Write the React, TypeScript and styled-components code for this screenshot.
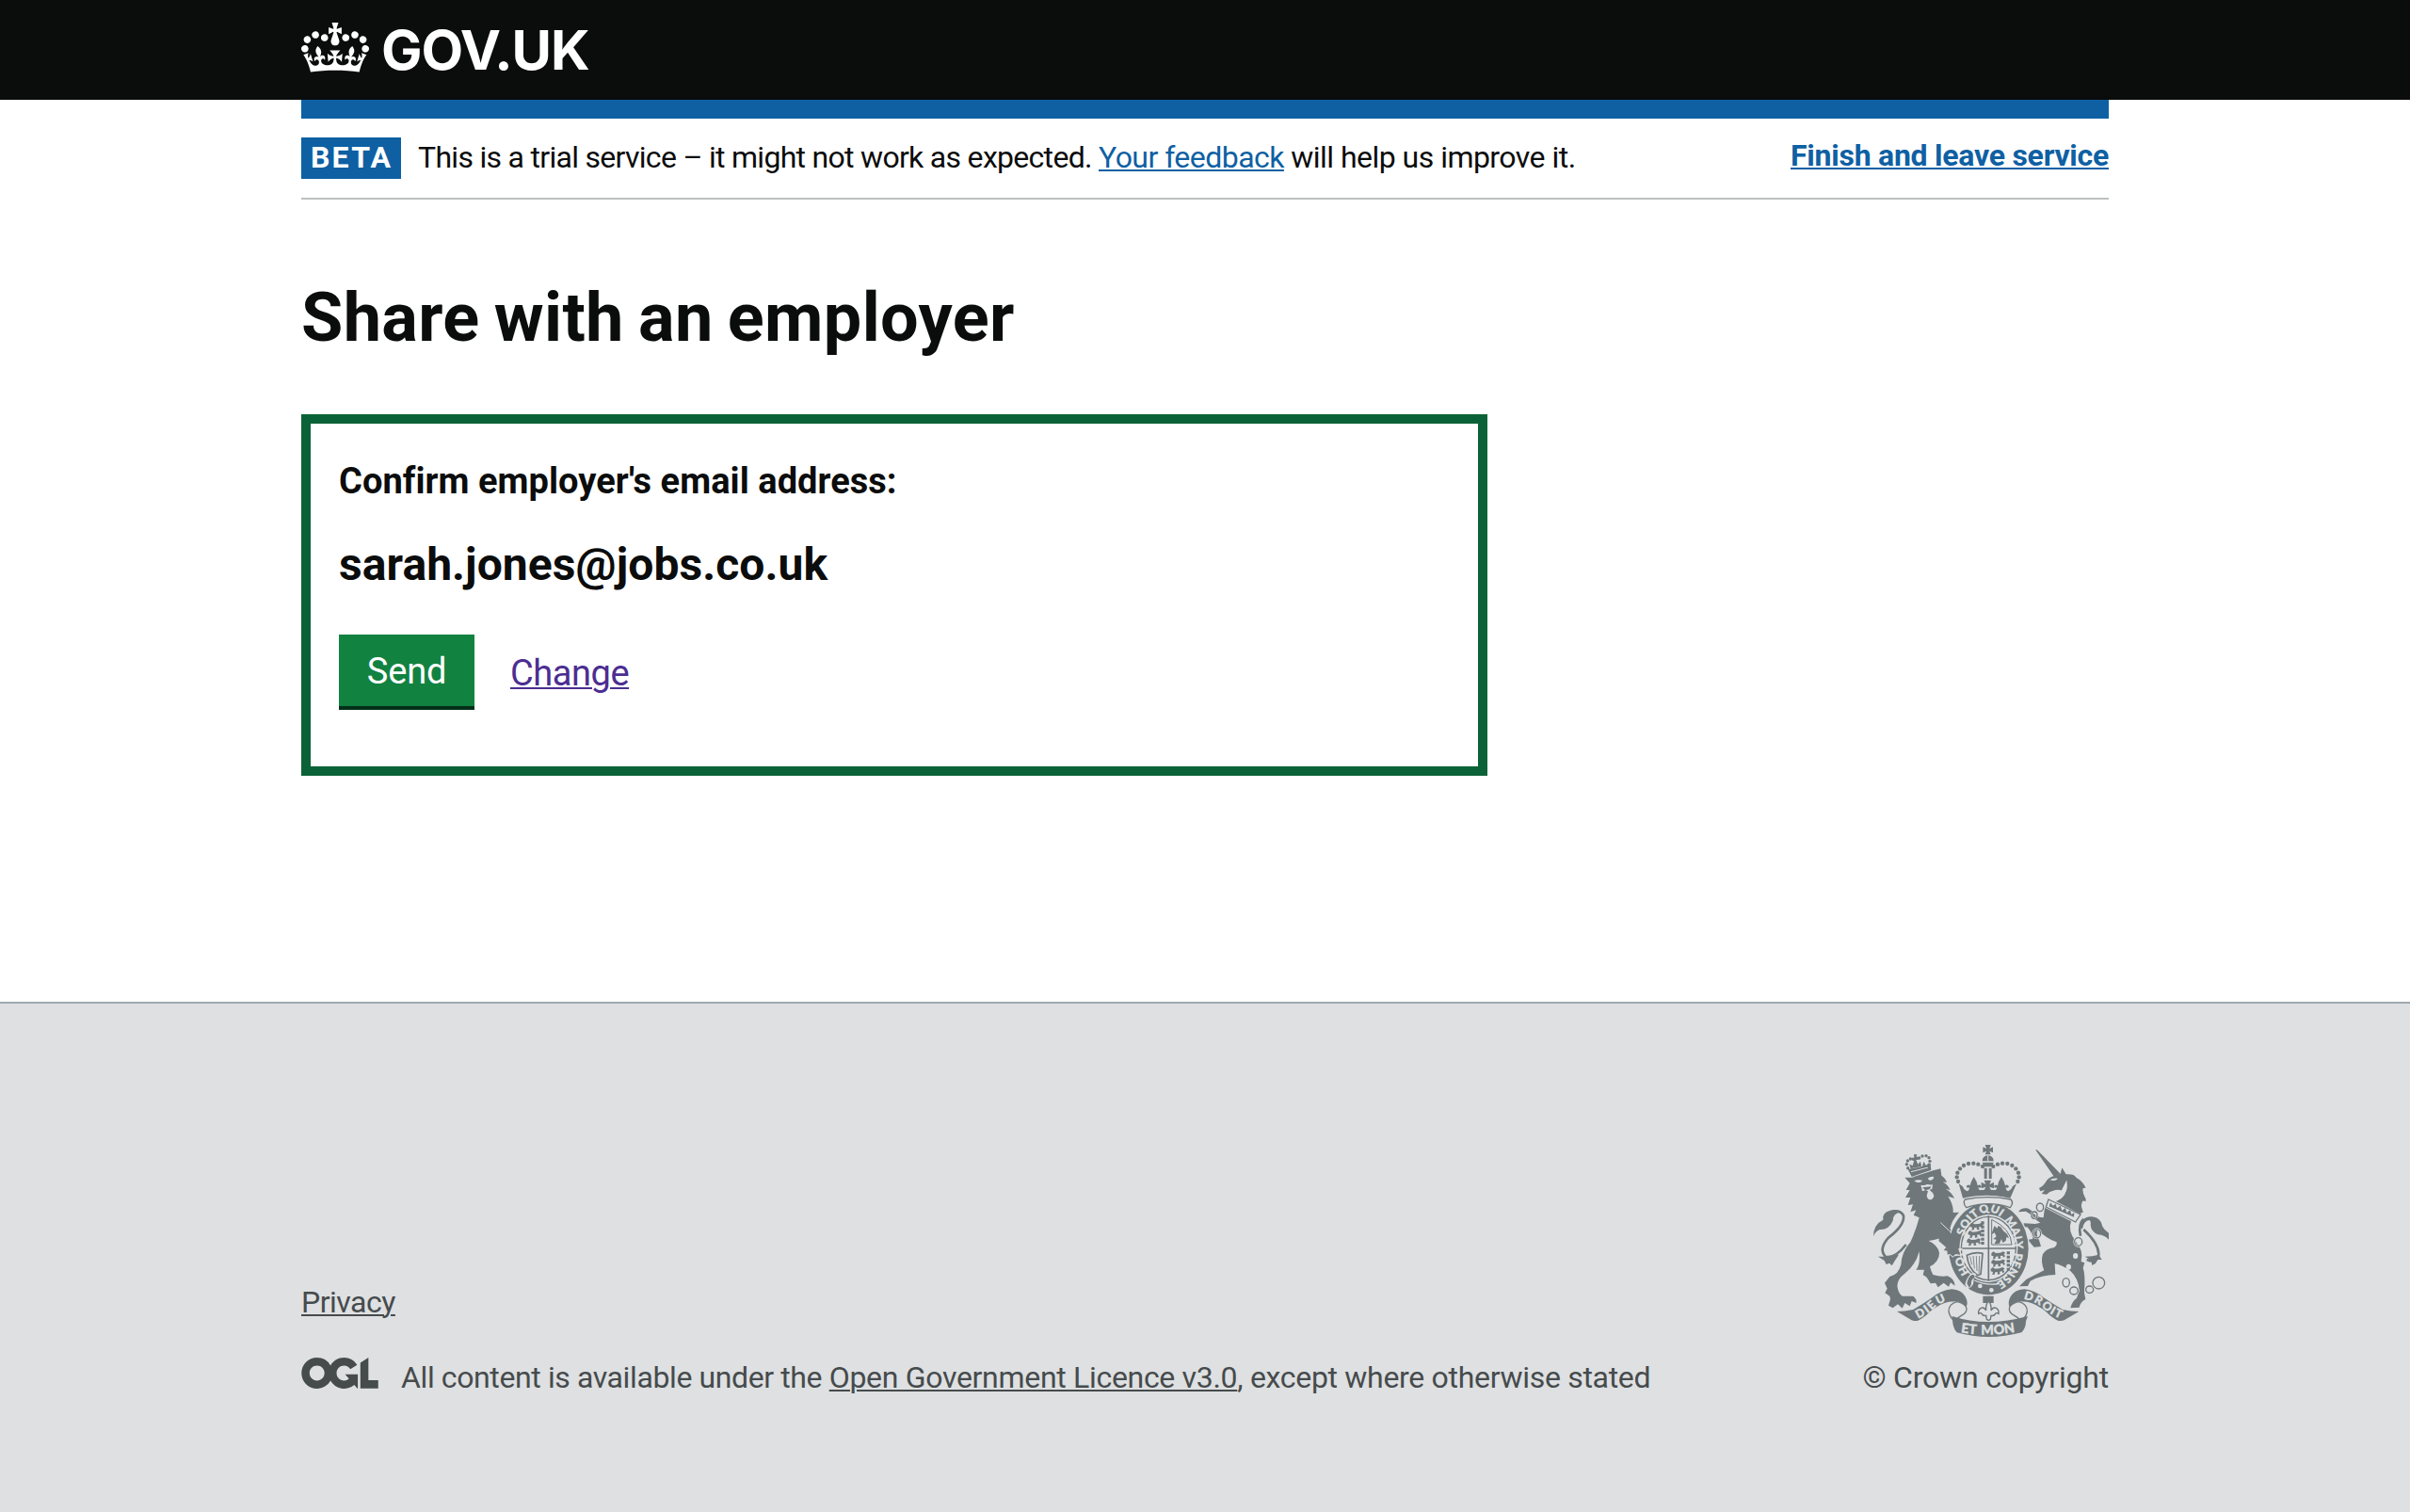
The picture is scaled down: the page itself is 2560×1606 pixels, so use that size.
import React from "react";
import styled, { createGlobalStyle } from "styled-components";

const color = {
  black: "#0b0c0c",
  blue: "#0e60a3",
  green: "#128241",
  greenDark: "#0c6238",
  greenShadow: "#032f17",
  visited: "#4b2e91",
  rule: "#bebfc0",
  footer: "#dee0e2",
  footerRule: "#9ea9af",
  footerText: "#464b4c",
  arms: "#6f777a",
};

const GlobalStyle = createGlobalStyle`
  *, *::before, *::after { box-sizing: border-box; }
  html, body { margin: 0; background: #fff; }
  body { font-family: Roboto, "Noto Sans", sans-serif; color: ${color.black}; }
  h1, p { margin: 0; }
`;

const Page = styled.div`
  display: flex;
  flex-direction: column;
  min-height: 1606px;
`;

const Container = styled.div`
  width: 1920px;
  margin: 0 auto;
`;

const Header = styled.header`
  height: 106px;
  background: ${color.black};
`;

const Brand = styled(Container)`
  display: flex;
  align-items: flex-start;
  gap: 13px;
  padding-top: 24px;
  color: #fff;
`;

const Crown = styled.svg`
  width: 72px;
  height: 53px;
  fill: currentColor;
`;

const BrandName = styled.span`
  margin-top: -1px;
  font: 700 58px/60px Inter, sans-serif;
  letter-spacing: -1.1px;
`;

const BlueBar = styled.div`
  height: 20px;
  background: ${color.blue};
`;

const PhaseBanner = styled.div`
  display: flex;
  align-items: flex-start;
  height: 86px;
  padding: 20px 0;
  border-bottom: 2px solid ${color.rule};
`;

const Tag = styled.strong`
  width: 106px;
  height: 44px;
  padding-left: 10px;
  background: ${color.blue};
  color: #fff;
  font-size: 32px;
  line-height: 42px;
  letter-spacing: 2.2px;
`;

const Text = styled.span<{ $track?: number }>`
  letter-spacing: ${(p) => p.$track ?? 0}px;
`;

const Link = styled.a<{ $tone: string; $track?: number; $bold?: boolean }>`
  color: ${(p) => p.$tone};
  font-weight: ${(p) => (p.$bold ? 700 : 400)};
  letter-spacing: ${(p) => p.$track ?? 0}px;
  text-decoration: underline;
  text-decoration-thickness: 2px;
  text-underline-offset: 2px;
`;

const PhaseText = styled.p`
  margin-left: 18px;
  font-size: 32px;
  line-height: 42px;
  white-space: nowrap;
`;

const Leave = styled.div`
  margin-left: auto;
  font-size: 32px;
  line-height: 38px;
`;

const Title = styled.h1`
  margin: 86px 0 62px;
  font-size: 72px;
  line-height: 80px;
  letter-spacing: 0.35px;
  word-spacing: -3px;
`;

const Panel = styled.section`
  width: 1260px;
  height: 384px;
  padding: 36px 30px 0;
  border: 10px solid ${color.greenDark};
`;

const PanelLabel = styled.p`
  font-size: 38px;
  font-weight: 700;
  line-height: 50px;
  letter-spacing: 0.05px;
`;

const Email = styled.p`
  margin-top: 34px;
  font-size: 48px;
  font-weight: 700;
  line-height: 60px;
  letter-spacing: 0.08px;
`;

const Actions = styled.div`
  display: flex;
  align-items: flex-start;
  gap: 38px;
  margin-top: 44px;
  font-size: 38px;
  line-height: 78px;
`;

const SendButton = styled.button`
  width: 144px;
  height: 80px;
  padding: 2px 0 0;
  border: 0;
  border-bottom: 4px solid ${color.greenShadow};
  background: ${color.green};
  color: #fff;
  font: 400 38px/74px Roboto, sans-serif;
  letter-spacing: -0.2px;
`;

const ChangeWrap = styled.div`
  margin-top: 2px;
`;

const Footer = styled.footer`
  flex: 1;
  margin-top: 240px;
  padding-top: 146px;
  border-top: 2px solid ${color.footerRule};
  background: ${color.footer};
  color: ${color.footerText};
  font-size: 32px;
  line-height: 40px;
`;

const FooterGrid = styled(Container)`
  display: grid;
  grid-template-columns: 1fr auto;
  align-items: end;
`;

const FooterMeta = styled.div`
  display: flex;
  flex-direction: column;
  gap: 40px;
`;

const Licence = styled.div`
  display: flex;
  align-items: flex-start;
  gap: 24px;
  white-space: nowrap;
`;

const OglLogo = styled.svg`
  width: 82px;
  height: 33px;
  margin-top: -1px;
  fill: currentColor;
`;

const Copyright = styled.div`
  display: flex;
  flex-direction: column;
  align-items: flex-end;
  gap: 23px;
  letter-spacing: -0.2px;
`;

const Arms = styled.svg`
  display: block;
  width: 252px;
  height: 208px;
  fill: ${color.arms};
  stroke: none;
  font-family: Lato, sans-serif;
  font-weight: 900;
  letter-spacing: 0;
`;

const lit = color.footer;
const ink = color.arms;

const archBeads: [number, number][] = [
  [408, 117], [394, 110], [379, 107], [363, 108], [348, 114], [336, 124], [328, 137], [326, 151], [330, 165],
];
const lionCrownBeads: [number, number][] = [
  [170, 122], [166, 110], [169, 99], [178, 93], [188, 94], [206, 90], [216, 84], [228, 83], [237, 89], [240, 100], [238, 111],
];
const chainRings: [number, number, number, number][] = [
  [591, 247, 11, 13], [573, 272, 9, 11], [581, 331, 12, 14], [713, 357, 12, 13], [674, 487, 11, 14],
  [699, 513, 13, 12], [749, 509, 12, 11], [778, 488, 19, 19],
];

const passant = "M0 6l6-6 8 5 14-1 10-4 6 4-4 5 4 6-6 4-2-6-8 1 2 8-8 1-1-8-7 1-2 7-7 1 2-9-7-2z";

function RibbonSide() {
  return (
    <g>
      <path d="M135 579q26 0 52-6 30-18 58-37 30-24 64-28 32 2 44 24 10 18 3 33-12-16-30-18l-26 1q-30 6-60 32-22 22-38 28-10 3-20-1z" />
      <path d="M326 548q-27 8-26 31 4 20 18 29 18-14 32-22 12-12 4-24-12-12-28-14z" fill={lit} stroke={ink} strokeWidth="4" />
    </g>
  );
}

function CoatOfArms() {
  return (
    <Arms viewBox="54 36 756 624" role="img">
      <defs>
        <path id="garter" d="M427 496A103 120 0 0 1 427 260A103 120 0 0 1 427 496" />
        <path id="dieu" d="M202 602Q232 588 256 566Q278 548 312 541" />
        <path id="droit" d="M538 539Q574 546 598 566Q624 592 668 606" />
        <path id="etmon" d="M338 646Q427 660 516 644" />
      </defs>

      {/* lion */}
      <path d="M170 126l72-15 2 17-62 22z" />
      <path d="M180 134l54-14" stroke={lit} strokeWidth="3" />
      {lionCrownBeads.map(([x, y]) => <circle key={`${x}-${y}`} cx={x} cy={y} r="5" />)}
      <path d="M189 78l10 1-2 7 6 0 1 9-8 1 6 14 8-9 3 15-34 8-4-14 10 5 5-18-7 0-1-8 8 0z" />
      <path d="M182 126l-7-14 9 2zM216 119l4-18 8 13 7-7-2 12z" />
      <path d="M160 152 L183 152 L250 130 L274 124 L277 146 Q290 154 294 168 L281 166 Q298 176 305 192 L290 188 Q310 200 318 218 L298 212 Q316 240 314 264 L333 263 Q312 284 304 314 Q334 350 338 398 L326 395 L318 404 L310 394 L298 399 L298 386 L284 384 L292 374 L268 354 L272 346 Q252 352 236 354 Q264 366 270 392 Q270 420 240 436 Q244 452 250 462 Q276 470 296 466 Q318 474 320 497 L306 487 L300 500 L284 488 L266 502 L258 488 L242 490 L230 470 L218 462 L222 446 L196 446 Q210 430 206 388 Q196 430 160 458 Q130 480 138 508 Q142 524 152 530 L186 530 Q200 540 196 552 L182 546 L176 562 L160 552 L152 569 L138 556 L122 568 L108 560 L114 540 L112 530 L97 520 L104 506 L96 488 L112 468 Q140 462 148 430 Q150 390 178 358 Q196 320 206 280 L188 272 L196 256 L178 262 L186 238 L170 240 L178 216 L162 216 L176 192 L164 192 L176 170 Z" />
      <path d="M190 162q12-4 26-1-4 8-13 7-8 0-13-6zM233 155q10-8 20-5-2 10-10 11-6 1-10-6zM211 176q8 2 14 0 6-4 14-1 6 2 10-1l-2 14-8 4q12 8 14 18-2 12-12 13-10-1-11-14l4-13-8-4-10 4z" fill={lit} />
      <path d="M216 184l28-3-4 8-14 4z" />
      <path d="M274 296l30 28q22 26 28 62" fill="none" stroke={lit} strokeWidth="3" />
      <path d="M274 298q14 20 30 30 24 28 32 70l-24-2-14-10-6-12-22-20-2-10 30-4z" />
      <path d="M164 366Q128 412 98 404Q76 380 108 344Q160 304 156 274Q148 254 118 262" fill="none" stroke={ink} strokeWidth="8" />
      <path d="M60 340Q60 302 91 287Q86 264 114 257Q134 252 150 262Q122 266 122 290Q108 320 80 318Q66 324 60 340ZM75 404l22 0 44-6-12 18-10 17-8-8-10 4-6-12z" />

      {/* unicorn */}
      <path d="M576 63l7 2 73 75-20 10z" />
      <path d="M588 186Q604 178 612 162Q620 150 640 146L656 140L661 121L674 142Q700 140 706 152Q728 164 736 184L728 184Q724 200 738 222L730 222Q716 240 728 262L718 268L642 228Q672 216 672 202Q660 188 640 192L622 198L612 206L596 204L606 192L592 196Z" />
      <path d="M622 160q12-8 26-5-8 11-26 5zM678 156q8 22-4 42-14 18-34 24 18-18 22-34z" fill={lit} />
      <path d="M672 146Q706 146 720 172L737 184L724 188L728 204L738 228L724 226L722 242L728 264L714 262L650 226Q690 200 672 146Z" />
      <path d="M606 248L690 292Q678 322 706 358Q730 384 722 420L733 424L728 440Q736 460 732 520L736 540Q720 548 716 566L688 568Q692 548 708 536L716 512Q714 474 688 450Q664 432 638 426L640 462Q596 462 560 482L552 498L525 499L548 476L604 448Q592 420 600 396Q612 378 634 376Q646 370 644 358Q612 348 584 318Q576 330 588 352L594 372L572 374L552 350L568 348Q566 326 550 310L528 312L540 298L576 300L592 296Q570 284 558 268L546 260L522 262Q530 248 550 250Q566 256 572 268Q582 280 602 280Z" />
      <path d="M618 222L720 270L704 294L610 246Z" fill={lit} stroke={ink} strokeWidth="4" />
      <path d="M620 244l4-12 8 10 9-6 4 14 11-8 5 15 11-8 4 15 11-8 4 14 9-6-1 14z" />
      <path d="M720 338Q712 300 730 284M730 318Q776 360 778 396Q774 428 740 414" fill="none" stroke={ink} strokeWidth="8" />
      <path d="M718 312Q722 276 756 277Q786 280 790 308Q796 320 811 330L810 350Q798 336 776 334Q754 326 752 304Q754 290 748 288Q730 290 726 316ZM734 404q26 0 44-6l10 16-14 0-6 12-12 6q2-18-22-28z" />
      {chainRings.map(([x, y, rx, ry]) => (
        <g key={`${x}-${y}`} fill="none">
          <ellipse cx={x} cy={y} rx={rx} ry={ry} stroke={lit} strokeWidth="8" />
          <ellipse cx={x} cy={y} rx={rx} ry={ry} stroke={ink} strokeWidth="4" />
        </g>
      ))}
      <ellipse cx="704" cy="402" rx="8" ry="9" fill={lit} />
      <ellipse cx="682" cy="437" rx="8" ry="9" fill={lit} />

      {/* garter and shield */}
      <ellipse cx="427" cy="379" rx="131" ry="151" fill={lit} />
      <ellipse cx="427" cy="379" rx="127" ry="147" />
      <ellipse cx="427" cy="378" rx="93" ry="108" fill={lit} />
      <ellipse cx="427" cy="378" rx="87" ry="101" fill="none" stroke={ink} strokeWidth="4" />
      <path d="M427 274v208M340 378h174" stroke={ink} strokeWidth="5" />
      <g transform="translate(366 298)"><path d={passant} transform="translate(2 -2)" /><path d={passant} transform="translate(-4 23)" /><path d={passant} transform="translate(-8 48)" /></g>
      <g transform="translate(436 388)"><path d={passant} /><path d={passant} transform="translate(0 25)" /><path d={passant} transform="translate(-2 50)" /></g>
      <path d="M408 292v76M490 388v62" stroke={ink} strokeWidth="10" strokeDasharray="9 4" />
      <path d="M437 286v80h64q-2-50-64-80z" fill="none" stroke={ink} strokeWidth="3" />
      <path d="M446 306l8 8 4-8 8 4 8 12 12 10 6 14-8-4-2 12-10 6-4-12-6 14-16 2 6-14-10-2 10-8-6-12-10 6 4-12z" />
      <path d="M358 400q24-12 50-6l-6 66-10 4q-30-22-34-64z" fill="none" stroke={ink} strokeWidth="5" />
      <path d="M368 404l6 26M378 402l4 40M388 402l2 48M398 402l-2 56" stroke={ink} strokeWidth="2.5" />
      <g fill={lit} stroke={lit} strokeWidth="1" fontSize="36" textAnchor="middle">
        <text><textPath href="#garter" startOffset="117">HON</textPath></text>
        <text letterSpacing="1"><textPath href="#garter" startOffset="239">SOIT</textPath></text>
        <text letterSpacing="1"><textPath href="#garter" startOffset="321">QUI</textPath></text>
        <text letterSpacing="1"><textPath href="#garter" startOffset="411">MAL</textPath></text>
        <text><textPath href="#garter" startOffset="459">Y</textPath></text>
        <text letterSpacing="1"><textPath href="#garter" startOffset="541">PENSE</textPath></text>
      </g>
      <path d="M300 322q24 24 36 76l-14-2-4 8-10-10-12 4q-4-36 4-76z" />
      <path d="M296 400l10-2 6 8 10-8" fill="none" stroke={lit} strokeWidth="3" />
      <path d="M352 492q6-24 20-34 14-6 16 6-10 4-8 14l-2 14q-6 12-18 16z" fill={lit} />
      <path d="M358 490q4-22 16-28 10-2 8 8-12 8-10 22l-6 12z" />
      <path d="M382 480q40 18 80 10" fill="none" stroke={lit} strokeWidth="4" />
      <circle cx="400" cy="498" r="7" fill={lit} />
      <circle cx="436" cy="511" r="7" fill={lit} />

      {/* royal crown */}
      <path d="M352 222q73-14 146 0 10 12-2 26-68-24-140 0-12-14-4-26z" fill={lit} stroke={ink} strokeWidth="4" />
      <path d="M416 48h18l-4 12 11-5v18l-11-5 4 11h-18l4-11-11 5V55l11 5z" />
      <path d="M407 100q0-17 18-18 18 1 18 18zM407 104h36q-4 14-12 14h-12q-8 0-12-14z" />
      <path d="M425 82v18" stroke={lit} strokeWidth="3" />
      <path d="M413 122h9v34h-9zM428 122h9v34h-9z" />
      {archBeads.map(([x, y]) => (
        <g key={`${x}-${y}`}><circle cx={x} cy={y} r="6.5" /><circle cx={850 - x} cy={y} r="6.5" /></g>
      ))}
      <path d="M332 172l12 8q4 12 14 16 8-2 8-12-8 4-10-4 6-8 12-2 2-12 12-28 10 14 12 28 8-6 12 2-2 8-10 4 2 10 12 12 10-4 12-14l-14 5v-20l14 7-5-13h22l-5 13 14-7v20l-14-5q2 10 12 14 10-2 12-12-8 4-10-4 4-8 12-2 2-14 12-28 10 16 12 28 6-6 12 2-2 8-10 4 0 10 8 12 10-4 14-16l12-8-20 46q-76-18-151 0z" />
      <path d="M352 204q73-14 146 0" fill="none" stroke={ink} strokeWidth="12" />

      {/* motto ribbon */}
      <RibbonSide />
      <g transform="matrix(-1 0 0 1 850 0)"><RibbonSide /></g>
      <path d="M311 594q110 36 241 0l-6 16q0 22-14 36-106 28-206 0-12-14-14-38z" />
      <path d="M409 530h34v22h-34z" />
      <path d="M427 546q-10 10-8 30-6-12-16-8-10 6-8 18 6-4 10 0 4 8 14 6l2 12q6 6 12 0l2-12q10 2 14-6 4-4 10 0 2-12-8-18-10-4-16 8 2-20-8-30z" fill={lit} stroke={ink} strokeWidth="4" />
      <g fill={lit} stroke={lit} strokeWidth="1">
        <text fontSize="37"><textPath href="#dieu" textLength="106">DIEU</textPath></text>
        <text fontSize="37"><textPath href="#droit" textLength="134">DROIT</textPath></text>
        <text fontSize="43" wordSpacing="6"><textPath href="#etmon" textLength="174">ET MON</textPath></text>
      </g>
    </Arms>
  );
}

export default function App() {
  return (
    <>
      <GlobalStyle />
      <Page>
        <Header>
          <Brand>
            <Crown viewBox="0 0 132 97" aria-hidden="true">
              <path fillRule="evenodd" d="M25 30.2c3.5 1.5 7.7-.2 9.1-3.7 1.5-3.6-.2-7.8-3.9-9.2-3.6-1.4-7.6.3-9.1 3.9-1.4 3.5.3 7.5 3.9 9zM9 39.5c3.6 1.5 7.8-.2 9.2-3.7 1.5-3.6-.2-7.8-3.9-9.1-3.6-1.5-7.6.2-9.1 3.8-1.4 3.5.3 7.5 3.8 9zM4.4 57.2c3.5 1.5 7.7-.2 9.1-3.8 1.5-3.6-.2-7.7-3.9-9.1-3.5-1.5-7.6.3-9.1 3.8-1.4 3.5.3 7.6 3.9 9.1zm38.3-21.4c3.5 1.5 7.7-.2 9.1-3.8 1.5-3.6-.2-7.7-3.9-9.1-3.6-1.5-7.6.3-9.1 3.8-1.3 3.6.4 7.7 3.9 9.1zm64.4-5.6c-3.6 1.5-7.8-.2-9.1-3.7-1.5-3.6.2-7.8 3.8-9.2 3.6-1.4 7.7.3 9.2 3.9 1.3 3.5-.4 7.5-3.9 9zm15.9 9.3c-3.6 1.5-7.7-.2-9.1-3.7-1.5-3.6.2-7.8 3.7-9.1 3.6-1.5 7.7.2 9.2 3.8 1.5 3.5-.3 7.5-3.8 9zm4.7 17.7c-3.6 1.5-7.8-.2-9.2-3.8-1.5-3.6.2-7.7 3.9-9.1 3.6-1.5 7.7.3 9.2 3.8 1.3 3.5-.4 7.6-3.9 9.1zM89.3 35.8c-3.6 1.5-7.8-.2-9.2-3.8-1.4-3.6.2-7.7 3.9-9.1 3.6-1.5 7.7.3 9.2 3.8 1.4 3.6-.3 7.7-3.9 9.1zM69.7 17.7l8.9 4.7V9.3l-8.9 2.8c-.2-.3-.5-.6-.9-.9L72.4 0H59.6l3.5 11.2c-.3.3-.6.5-.9.9l-8.8-2.8v13.1l8.8-4.7c.3.3.6.7.9.9l-5 15.4v.1c-.2.8-.4 1.6-.4 2.4 0 4.1 3.1 7.5 7 8.1h.2c.3 0 .7.1 1 .1.4 0 .7 0 1-.1h.2c4-.6 7.1-4.1 7.1-8.1 0-.8-.1-1.7-.4-2.4V34l-5.1-15.4c.4-.2.7-.6 1-.9zM66 92.8c16.9 0 32.8 1.1 47.1 3.2 4-16.9 8.9-26.7 14-33.5l-9.6-3.4c1 4.9 1.1 7.2 0 10.2-1.5-1.4-3-4.3-4.2-8.7L108.6 76c2.8-2 5-3.2 7.5-3.3-4.4 9.4-10 11.9-13.6 11.2-4.3-.8-6.3-4.6-5.6-7.9 1-4.7 5.7-5.9 8-.5 4.3-8.7-3-11.4-7.6-8.8 7.1-7.2 7.9-13.5 2.1-21.1-8 6.1-8.1 12.3-4.5 20.8-4.7-5.4-12.1-2.5-9.5 6.2 3.4-5.2 7.9-2 7.2 3.1-.6 4.3-6.4 7.8-13.5 7.2-10.3-.9-10.9-8-11.2-13.8 2.5-.5 7.1 1.8 11 7.3L80.2 60c-4.1 4.4-8 5.3-12.3 5.4 1.4-4.4 8-11.6 8-11.6H55.5s6.4 7.2 7.9 11.6c-4.2-.1-8-1-12.3-5.4l1.4 16.4c3.9-5.5 8.5-7.7 10.9-7.3-.3 5.8-.9 12.8-11.1 13.8-7.2.6-12.9-2.9-13.5-7.2-.7-5 3.8-8.3 7.1-3.1 2.7-8.7-4.6-11.6-9.4-6.2 3.7-8.5 3.6-14.7-4.6-20.8-5.8 7.6-5 13.9 2.2 21.1-4.7-2.6-11.9.1-7.7 8.8 2.3-5.5 7.1-4.2 8.1.5.7 3.3-1.3 7.1-5.7 7.9-3.5.7-9-1.8-13.5-11.2 2.5.1 4.7 1.3 7.5 3.3l-4.7-15.4c-1.2 4.4-2.7 7.2-4.3 8.7-1.1-3-.9-5.3 0-10.2l-9.5 3.4c5 6.9 9.9 16.7 14 33.5 14.8-2.1 30.8-3.2 47.7-3.2z" />
            </Crown>
            <BrandName>GOV.UK</BrandName>
          </Brand>
        </Header>

        <Container>
          <BlueBar />
          <PhaseBanner>
            <Tag>BETA</Tag>
            <PhaseText>
              <Text $track={-0.705}>This is a trial service – it might not work as expected. </Text>
              <Link $tone={color.blue} $track={-0.54}>Your feedback</Link>
              <Text $track={-0.53}> will help us improve it.</Text>
            </PhaseText>
            <Leave>
              <Link $tone={color.blue} $track={-0.25} $bold>Finish and leave service</Link>
            </Leave>
          </PhaseBanner>

          <main>
            <Title>Share with an employer</Title>
            <Panel>
              <PanelLabel>Confirm employer's email address:</PanelLabel>
              <Email>sarah.jones@jobs.co.uk</Email>
              <Actions>
                <SendButton>Send</SendButton>
                <ChangeWrap>
                  <Link $tone={color.visited} $track={-0.45}>Change</Link>
                </ChangeWrap>
              </Actions>
            </Panel>
          </main>
        </Container>

        <Footer>
          <FooterGrid>
            <FooterMeta>
              <div>
                <Link $tone={color.footerText} $track={-0.5}>Privacy</Link>
              </div>
              <Licence>
                <OglLogo viewBox="0 0 483.2 195.7" aria-hidden="true">
                  <path d="M421.5 142.8V.1l-50.7 32.3v161.1h112.4v-50.7zm-122.3-9.6A47.12 47.12 0 0 1 221 97.8c0-26 21.1-47.1 47.1-47.1 16.7 0 31.4 8.7 39.7 21.8l42.7-27.2A97.63 97.63 0 0 0 268.1 0c-36.5 0-68.3 20.1-85.1 49.7A98 98 0 0 0 97.8 0C43.9 0 0 43.9 0 97.8s43.9 97.8 97.8 97.8c36.5 0 68.3-20.1 85.1-49.7a97.76 97.76 0 0 0 149.6 25.4l19.4 22.2h3v-87.8h-80l24.3 27.5zM97.8 145c-26 0-47.1-21.1-47.1-47.1s21.1-47.1 47.1-47.1 47.1 21.1 47.1 47.1S123.8 145 97.8 145" />
                </OglLogo>
                <p>
                  <Text $track={-0.39}>All content is available under the </Text>
                  <Link $tone={color.footerText} $track={-0.31}>Open Government Licence v3.0</Link>
                  <Text $track={-0.31}>, except where otherwise stated</Text>
                </p>
              </Licence>
            </FooterMeta>
            <Copyright>
              <CoatOfArms />
              <span>© Crown copyright</span>
            </Copyright>
          </FooterGrid>
        </Footer>
      </Page>
    </>
  );
}
